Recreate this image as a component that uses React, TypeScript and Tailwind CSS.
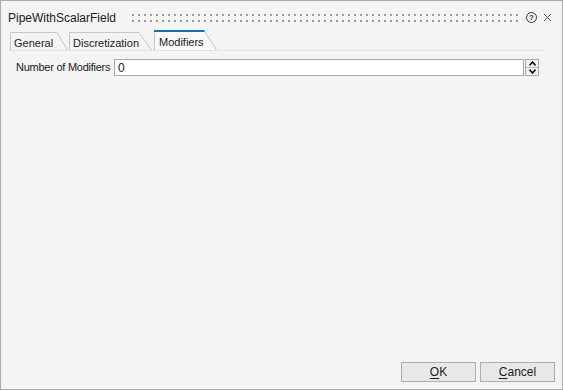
import { X } from 'lucide-react';

const font = { fontFamily: '"Liberation Sans", Arial, sans-serif' };

interface TabDef {
  label: string;
  width: number;
  slant: number;
  active?: boolean;
}

const tabs: TabDef[] = [
  { label: 'General', width: 58, slant: 47 },
  { label: 'Discretization', width: 83, slant: 70 },
  { label: 'Modifiers', width: 63, slant: 50, active: true },
];

function Tab({ tab }: { tab: TabDef }) {
  const h = tab.active ? 20 : 18;
  return (
    <div
      className={`relative shrink-0 ${tab.active ? 'h-[20px]' : 'h-[18px]'}`}
      style={{ width: tab.width }}
    >
      {/* tab outline with the slanted right edge */}
      <svg className="absolute inset-0" width={tab.width} height={h}>
        <path
          d={`M0 ${h} L0 0 L${tab.slant} 0 L${tab.width - 1} ${h} Z`}
          fill={tab.active ? '#f8f8f8' : '#f4f4f4'}
        />
        <path
          d={`M0.5 ${h} V0.5 H${tab.slant} L${tab.width - 0.5} ${h}`}
          fill="none"
          stroke="#c6c6c6"
        />
        {tab.active && <rect x="0" y="0" width={tab.slant + 0.5} height="2" fill="#1a70a8" />}
      </svg>
      <span
        className={`absolute whitespace-nowrap text-[11px] text-[#1a1a1a] ${tab.active ? 'left-[5px] top-[4px]' : 'left-[4px] top-[3px]'}`}
      >
        {tab.label}
      </span>
    </div>
  );
}

function Spin() {
  return (
    <div className="flex h-[17px] w-[14px] flex-col border border-[#a8a8a8] bg-[#f2f2f2]">
      <div className="flex flex-1 items-center justify-center border-b border-[#bcbcbc]">
        <svg width="7" height="5" viewBox="0 0 7 5">
          <path d="M0.5 4.5 L3.5 1 L6.5 4.5" fill="none" stroke="#111" strokeWidth="1.6" />
        </svg>
      </div>
      <div className="flex flex-1 items-center justify-center">
        <svg width="7" height="5" viewBox="0 0 7 5">
          <path d="M0.5 0.5 L3.5 4 L6.5 0.5" fill="none" stroke="#111" strokeWidth="1.6" />
        </svg>
      </div>
    </div>
  );
}

export default function App() {
  return (
    <div
      className="flex h-[390px] w-[563px] flex-col border border-[#ababab] bg-[#f4f4f4]"
      style={font}
    >
      {/* Title bar */}
      <div className="flex h-[29px] items-center pl-[7px] pr-[8px] pt-[4px]">
        <span className="whitespace-nowrap text-[12px] text-[#1a1a1a]">PipeWithScalarField</span>
        <div className="ml-[14px] h-[12px] flex-1 bg-[radial-gradient(circle,#9c9c9c_1px,transparent_1.2px)] bg-[length:6px_6px]" />
        <div className="ml-[7px] flex h-[11px] w-[11px] items-center justify-center rounded-full border border-[#333] text-[8px] font-bold leading-none text-[#333]">
          ?
        </div>
        <X className="ml-[4px] h-[13px] w-[13px] text-[#333]" strokeWidth={1.5} />
      </div>

      {/* Tab strip */}
      <div className="ml-[8px] mr-[18px] flex items-end gap-[1px] border-b border-[#e2e2e2] pl-px">
        {tabs.map((tab) => (
          <div key={tab.label} className={tab.label === 'Modifiers' ? 'ml-[1px]' : ''}>
            <Tab tab={tab} />
          </div>
        ))}
      </div>

      {/* Content */}
      <div className="flex items-center pl-[15px] pr-[23px] pt-[8px] text-[11px] text-[#1a1a1a]">
        <span className="w-[98px] shrink-0 whitespace-nowrap tracking-[-0.25px]">Number of Modifiers</span>
        <div className="flex h-[17px] flex-1 items-center border border-[#a8a8a8] bg-white pl-[3px] text-[12px]">
          0
        </div>
        <div className="ml-[1px]">
          <Spin />
        </div>
      </div>

      {/* Buttons */}
      <div className="mt-auto flex justify-end gap-[4px] pb-[7px] pr-[7px] text-[12px] text-[#1a1a1a]">
        <button className="h-[20px] w-[75px] border border-[#adadad] bg-[#e8e8e8]">
          <span className="underline underline-offset-2">O</span>K
        </button>
        <button className="h-[20px] w-[75px] border border-[#adadad] bg-[#e8e8e8]">
          <span className="underline underline-offset-2">C</span>ancel
        </button>
      </div>
    </div>
  );
}
